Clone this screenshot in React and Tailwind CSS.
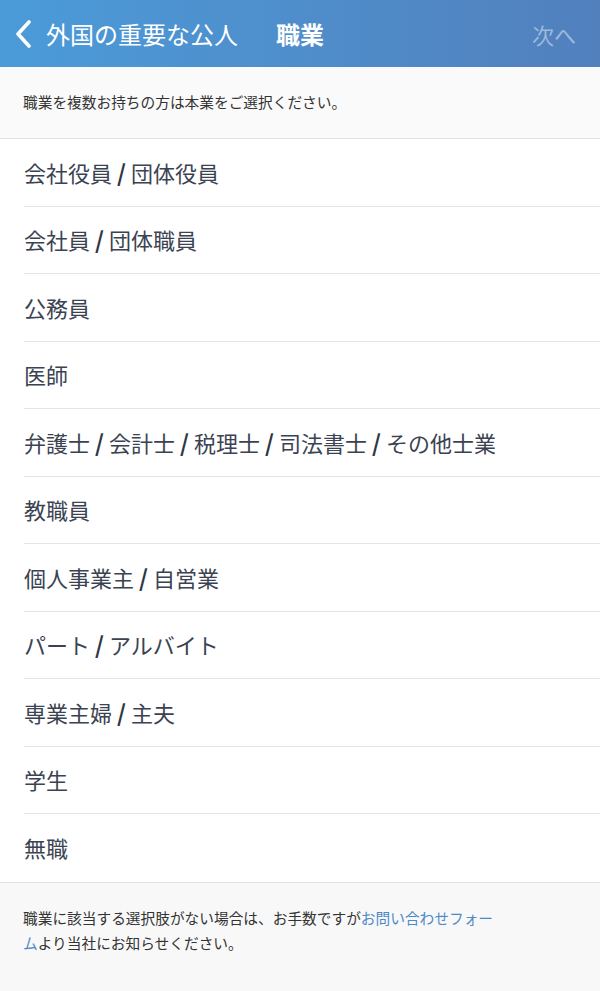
import React from "react";

const items = [
  "会社役員 / 団体役員",
  "会社員 / 団体職員",
  "公務員",
  "医師",
  "弁護士 / 会計士 / 税理士 / 司法書士 / その他士業",
  "教職員",
  "個人事業主 / 自営業",
  "パート / アルバイト",
  "専業主婦 / 主夫",
  "学生",
  "無職",
];

function Label({ text }) {
  const parts = text.split(" / ");
  return (
    <span className="flex items-center">
      {parts.map((p, i) => (
        <React.Fragment key={i}>
          {i > 0 && (
            <span className="inline-block w-[19px] text-center font-semibold text-[23px] leading-none text-[#2f3644]">/</span>
          )}
          <span>{p}</span>
        </React.Fragment>
      ))}
    </span>
  );
}

export default function App() {
  return (
    <div
      className="w-[600px] h-[991px] bg-[#f8f8f8] flex flex-col overflow-hidden"
      style={{ fontFamily: '"Noto Sans CJK JP", "Noto Sans", sans-serif' }}
    >
      <header className="h-[67px] shrink-0 bg-gradient-to-r from-[#4b9bd9] to-[#5180bd] flex items-center text-white">
        <svg width="20" height="28" viewBox="0 0 20 28" className="ml-[13px]" fill="none">
          <path d="M16 2 L5 14 L16 26" stroke="white" strokeWidth="3.6" strokeLinecap="round" strokeLinejoin="round" />
        </svg>
        <span className="ml-[13px] text-[24px] leading-none">外国の重要な公人</span>
        <span className="ml-[38px] text-[24px] leading-none font-bold">職業</span>
        <span className="ml-auto mr-[24px] text-[22px] leading-none text-white/45">次へ</span>
      </header>
      <div className="h-[72px] shrink-0 bg-[#fafafa] border-b border-[#e2e2e2] flex items-center pl-[23px] text-[14.7px] text-[#333]">
        職業を複数お持ちの方は本業をご選択ください。
      </div>
      <ul className="bg-white border-b border-[#e2e2e2]">
        {items.map((t, i) => (
          <li key={i} className="pl-[24px]">
            <div
              className={
                "h-[67.5px] flex items-center text-[22px] text-[#3b4352] " +
                (i < items.length - 1 ? "border-b border-[#e4e4e4]" : "")
              }
            >
              <Label text={t} />
            </div>
          </li>
        ))}
      </ul>
      <div className="pl-[23px] pr-[98px] pt-[22px] text-[14.7px] leading-[25px] text-[#333]">
        職業に該当する選択肢がない場合は、お手数ですが<span className="text-[#4d89c9]">お問い合わせフォーム</span>より当社にお知らせください。
      </div>
    </div>
  );
}
